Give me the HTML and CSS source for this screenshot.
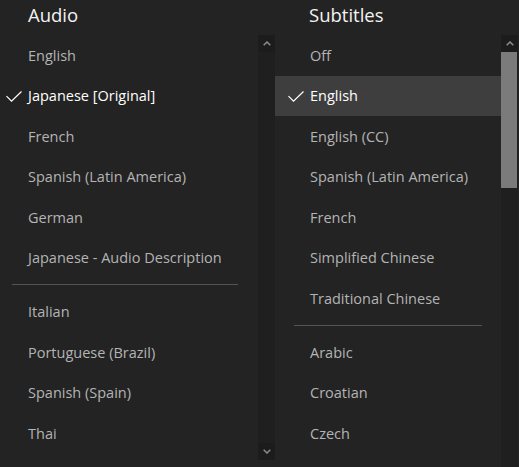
FILE: index.html
```html
<!DOCTYPE html>
<html>
<head>
<meta charset="utf-8">
<link rel="stylesheet" href="styles.css">
</head>
<body>
<div class="menu">
  <section class="col audio">
    <h2 class="title">Audio</h2>
    <div class="body">
      <ul class="list">
        <li class="row"><span class="check"></span>English</li>
        <li class="row selected"><span class="check"><svg width="16" height="11" viewBox="0 0 16 11"><polyline points="0.5,5.2 5.5,10.2 15.5,0.5" fill="none" stroke="#fff" stroke-width="1.2"/></svg></span>Japanese [Original]</li>
        <li class="row"><span class="check"></span>French</li>
        <li class="row"><span class="check"></span>Spanish (Latin America)</li>
        <li class="row"><span class="check"></span>German</li>
        <li class="row"><span class="check"></span>Japanese - Audio Description</li>
        <li class="divider"></li>
        <li class="row"><span class="check"></span>Italian</li>
        <li class="row"><span class="check"></span>Portuguese (Brazil)</li>
        <li class="row"><span class="check"></span>Spanish (Spain)</li>
        <li class="row"><span class="check"></span>Thai</li>
      </ul>
      <div class="scrollbar">
        <div class="sb-btn"><svg width="8" height="5" viewBox="0 0 8 5"><polyline points="0.7,4.3 4,1 7.3,4.3" fill="none" stroke="#8c8c8c" stroke-width="1.5"/></svg></div>
        <div class="sb-track"></div>
        <div class="sb-btn"><svg width="8" height="5" viewBox="0 0 8 5"><polyline points="0.7,0.7 4,4 7.3,0.7" fill="none" stroke="#8c8c8c" stroke-width="1.5"/></svg></div>
      </div>
    </div>
  </section>
  <section class="col subs">
    <h2 class="title">Subtitles</h2>
    <div class="body">
      <ul class="list">
        <li class="row"><span class="check"></span>Off</li>
        <li class="row selected highlight"><span class="check"><svg width="16" height="11" viewBox="0 0 16 11"><polyline points="0.5,5.2 5.5,10.2 15.5,0.5" fill="none" stroke="#fff" stroke-width="1.2"/></svg></span>English</li>
        <li class="row"><span class="check"></span>English (CC)</li>
        <li class="row"><span class="check"></span>Spanish (Latin America)</li>
        <li class="row"><span class="check"></span>French</li>
        <li class="row"><span class="check"></span>Simplified Chinese</li>
        <li class="row"><span class="check"></span>Traditional Chinese</li>
        <li class="divider"></li>
        <li class="row"><span class="check"></span>Arabic</li>
        <li class="row"><span class="check"></span>Croatian</li>
        <li class="row"><span class="check"></span>Czech</li>
      </ul>
      <div class="scrollbar full">
        <div class="sb-btn"><svg width="8" height="5" viewBox="0 0 8 5"><polyline points="0.7,4.3 4,1 7.3,4.3" fill="none" stroke="#8c8c8c" stroke-width="1.5"/></svg></div>
        <div class="sb-track"><div class="thumb"></div></div>
      </div>
    </div>
  </section>
</div>
</body>
</html>
```
FILE: styles.css
```css
* { box-sizing: border-box; }
html, body {
  margin: 0;
  padding: 0;
  background: #232323;
  width: 519px;
  height: 467px;
  overflow: hidden;
}
body {
  font-family: "Open Sans", "Noto Sans", sans-serif;
  color: #b4b4b4;
}
.menu {
  display: flex;
  height: 467px;
}
.col {
  display: flex;
  flex-direction: column;
  height: 467px;
}
.audio { width: 275px; }
.subs { width: 244px; }
.title {
  margin: 0;
  height: 35px;
  font-size: 18.5px;
  font-weight: 400;
  color: #f2f2f2;
  line-height: 29px;
}
.audio .title { padding-left: 28px; }
.subs .title { padding-left: 34px; }
.body {
  display: flex;
  flex: 1;
  min-height: 0;
}
.list {
  list-style: none;
  margin: 0;
  padding: 0;
  flex: 1;
  overflow: hidden;
}
.row {
  height: 40.5px;
  display: flex;
  align-items: center;
  font-size: 14.5px;
  white-space: nowrap;
}
.audio .row { padding-left: 6px; }
.subs .row { padding-left: 13px; }
.check {
  width: 22px;
  flex: none;
  display: flex;
  align-items: center;
  padding-top: 1px;
}
.selected { color: #ffffff; }
.highlight { background: #3e3e3e; }
.divider {
  height: 13.5px;
  padding-top: 6px;
}
.divider::before {
  content: "";
  display: block;
  height: 1px;
  background: #545454;
}
.audio .divider { margin: 0 20px 0 12px; }
.subs .divider { margin: 0 19px 0 19px; }
.scrollbar {
  width: 17px;
  flex: none;
  display: flex;
  flex-direction: column;
  height: 425px;
  background: #1f1f1f;
}
.scrollbar.full {
  height: 432px;
  margin-right: 1px;
}
.sb-btn {
  height: 17px;
  flex: none;
  display: flex;
  align-items: center;
  justify-content: center;
  background: #1c1c1c;
}
.sb-track { flex: 1; }
.thumb {
  height: 136px;
  width: 16px;
  background: #7b7b7b;
}
```
